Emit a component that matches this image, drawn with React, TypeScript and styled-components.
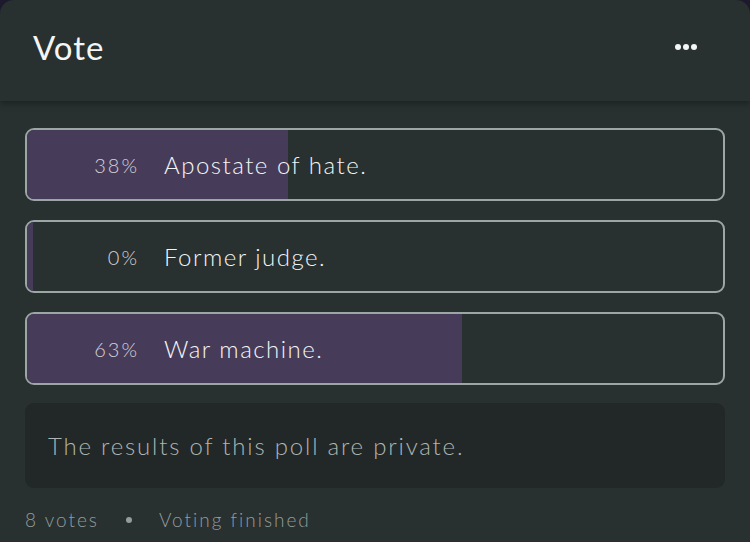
import styled, { createGlobalStyle } from "styled-components";

const GlobalStyle = createGlobalStyle`
    html, body {
        margin: 0;
        padding: 0;
        background: #1e1a2e;
    }
    body {
        font-family: Lato, "Noto Sans", sans-serif;
    }
`;

const Card = styled.div`
    width: 750px;
    height: 542px;
    background: #283030;
    border-radius: 14px 14px 0 0;
    overflow: hidden;
    display: flex;
    flex-direction: column;
`;

const Header = styled.div`
    height: 101px;
    box-sizing: border-box;
    padding: 0 53px 8px 33px;
    display: flex;
    align-items: center;
    justify-content: space-between;
    box-shadow: 0 3px 6px rgba(0, 0, 0, 0.28);
    position: relative;
    z-index: 1;
`;

const Title = styled.h1`
    margin: 0;
    font-size: 33px;
    font-weight: 400;
    color: #f4f6f6;
    letter-spacing: 1px;
`;

const MoreButton = styled.button`
    background: none;
    border: none;
    padding: 0;
    display: flex;
    gap: 2px;
    cursor: pointer;
    span {
        width: 6px;
        height: 6px;
        border-radius: 50%;
        background: #f4f6f6;
    }
`;

const Body = styled.div`
    padding: 27px 25px 0;
    display: flex;
    flex-direction: column;
    gap: 19px;
`;

const Option = styled.div`
    position: relative;
    height: 73px;
    box-sizing: border-box;
    border: 2px solid #9ca6a5;
    border-radius: 9px;
    overflow: hidden;
    display: flex;
    align-items: center;
`;

const Fill = styled.div`
    position: absolute;
    left: 0;
    top: 0;
    bottom: 0;
    min-width: 6px;
    background: #463c5a;
`;

const Percent = styled.span`
    position: relative;
    width: 112px;
    text-align: right;
    font-size: 20px;
    font-weight: 300;
    color: #d4d2dc;
    letter-spacing: 2px;
`;

const Label = styled.span`
    position: relative;
    margin-left: 25px;
    font-size: 24px;
    font-weight: 300;
    color: #f3f5f5;
    letter-spacing: 1.5px;
`;

const PrivateNote = styled.div`
    margin-top: -1px;
    height: 85px;
    box-sizing: border-box;
    padding: 0 23px;
    background: #212827;
    border-radius: 9px;
    display: flex;
    align-items: center;
    font-size: 24px;
    font-weight: 300;
    color: #adb5b4;
    letter-spacing: 1.8px;
`;

const Footer = styled.div`
    display: flex;
    align-items: center;
    margin-top: 1px;
    font-size: 19px;
    font-weight: 300;
    color: #939d9c;
    letter-spacing: 2px;
`;

const Dot = styled.span`
    width: 6px;
    height: 6px;
    border-radius: 50%;
    background: #939d9c;
    margin: 0 27px 0 27px;
`;

const options = [
    { label: "Apostate of hate.", votes: 3 },
    { label: "Former judge.", votes: 0 },
    { label: "War machine.", votes: 5 },
];

const total = 8;

export default function App() {
    return <>
        <GlobalStyle />
        <Card>
            <Header>
                <Title>Vote</Title>
                <MoreButton aria-label="More">
                    <span /><span /><span />
                </MoreButton>
            </Header>
            <Body>
                {options.map((o) => {
                    const share = (o.votes / total) * 100;
                    return <Option key={o.label}>
                        <Fill style={{ width: `${share}%` }} />
                        <Percent>{Math.round(share)}%</Percent>
                        <Label>{o.label}</Label>
                    </Option>;
                })}
                <PrivateNote>The results of this poll are private.</PrivateNote>
                <Footer>
                    <span>8 votes</span>
                    <Dot />
                    <span>Voting finished</span>
                </Footer>
            </Body>
        </Card>
    </>;
}
